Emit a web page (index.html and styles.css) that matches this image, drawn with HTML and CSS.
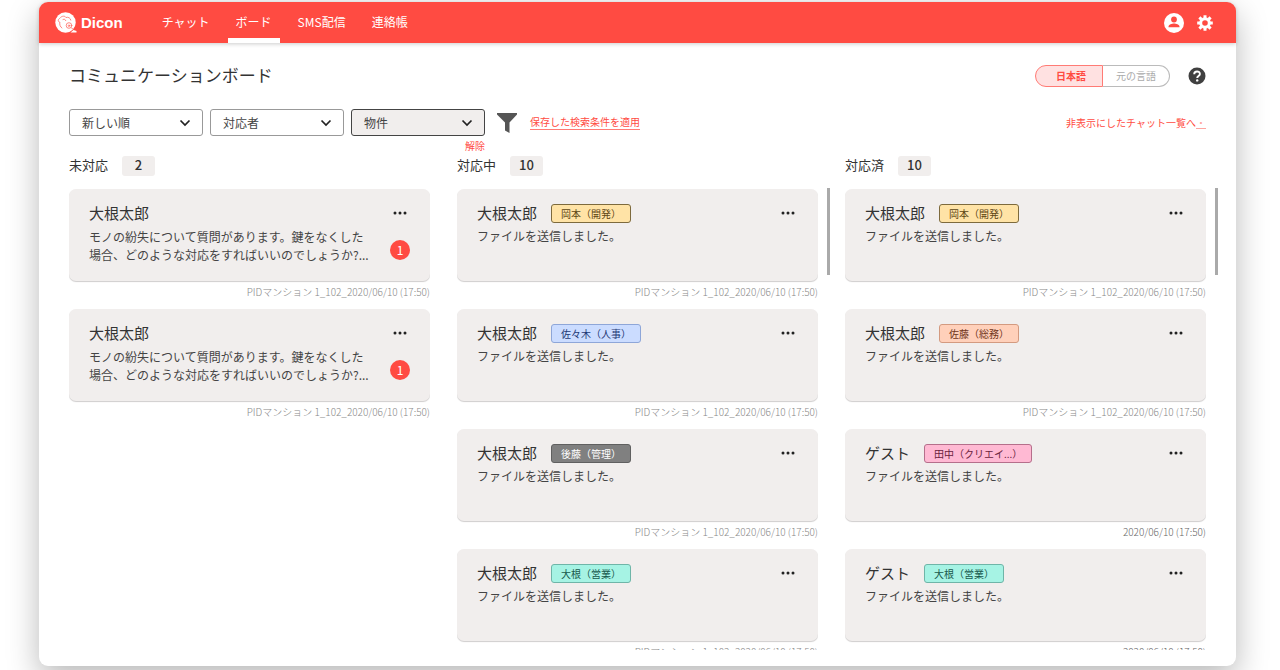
FILE: index.html
```html
<!DOCTYPE html>
<html lang="ja">
<head>
<meta charset="utf-8">
<title>Dicon</title>
<link rel="stylesheet" href="styles.css">
</head>
<body>
<svg width="0" height="0" class="defs" aria-hidden="true">
  <symbol id="chevron" viewBox="0 0 12 8"><path d="M1.500 1.500 6 6l4.500-4.500" fill="none" stroke="#222" stroke-width="1.700"/></symbol>
  <symbol id="dots" viewBox="0 0 14 4"><circle cx="2" cy="2" r="1.500"/><circle cx="7" cy="2" r="1.500"/><circle cx="12" cy="2" r="1.500"/></symbol>
</svg>
<div class="window">
  <header class="topbar">
    <a class="brand" href="#">
      <svg class="brand-mark" viewBox="0 0 22 22" aria-hidden="true">
        <circle cx="10.500" cy="10.500" r="10.200" fill="#fff"/>
        <path d="M15.500 20.400h6v-1.500l-3-1z" fill="#fff"/>
        <g fill="none" stroke="#ff6a62" stroke-width=".8" stroke-linecap="round">
          <path d="M4.500 6.500c-2 .8-1.500 3.500.4 3.700-.6 2.300.3 4.600 2 5.800M5.500 5.500C7 3.700 10 3.700 11 5.500c2.200-.8 4.500.5 4.800 2.600M8 7.500c1.500-.8 2.500 0 2.700 1"/>
          <circle cx="14" cy="13.500" r="2.800"/><circle cx="14" cy="13.700" r=".8"/>
          <path d="M16.500 16l2 1.500"/>
        </g>
      </svg>
      <span>Dicon</span>
    </a>
    <nav class="nav">
      <a href="#">チャット</a>
      <a href="#" class="active" aria-current="page">ボード</a>
      <a href="#">SMS配信</a>
      <a href="#">連絡帳</a>
    </nav>
    <button class="icon-btn" aria-label="アカウント">
      <svg width="20" height="20" viewBox="0 0 20 20"><circle cx="10" cy="10" r="10" fill="#fff"/><circle cx="10" cy="6.500" r="2.900" fill="#ff4b42"/><path d="M4.500 13.800c0-2.200 3.500-3.200 5.500-3.200s5.500 1 5.500 3.200v.4h-11z" fill="#ff4b42"/></svg>
    </button>
    <button class="icon-btn" aria-label="設定">
      <svg width="16" height="16" viewBox="-8 -8 16 16">
        <circle r="4.300" fill="none" stroke="#fff" stroke-width="3"/>
        <g stroke="#fff" stroke-width="3"><path d="M0-5v-2.800M0 5v2.800M-5 0h-2.800M5 0h2.800M3.600-3.600l2-2M-3.600 3.600l-2 2M-3.600-3.600l-2-2M3.600 3.600l2 2"/></g>
      </svg>
    </button>
  </header>

  <main class="content">
    <div class="title-row">
      <h1 class="title">コミュニケーションボード</h1>
      <div class="toggle">
        <button class="toggle-opt on" aria-pressed="true">日本語</button>
        <button class="toggle-opt" aria-pressed="false">元の言語</button>
      </div>
      <button class="help" aria-label="ヘルプ">
        <svg width="18" height="18" viewBox="0 0 18 18"><circle cx="9" cy="9" r="8.500" fill="#404040"/><path d="M6.200 7.200c0-3.700 5.700-3.600 5.700-.2 0 2-2.700 2.100-2.700 4" fill="none" stroke="#fff" stroke-width="1.900"/><circle cx="9.200" cy="13.400" r="1.200" fill="#fff"/></svg>
      </button>
    </div>

    <div class="filters">
      <div class="select">
        <select aria-label="並び順"><option>新しい順</option></select>
        <svg class="chevron" aria-hidden="true"><use href="#chevron"/></svg>
      </div>
      <div class="select">
        <select aria-label="対応者"><option>対応者</option></select>
        <svg class="chevron" aria-hidden="true"><use href="#chevron"/></svg>
      </div>
      <div class="select chosen">
        <select aria-label="物件"><option>物件</option></select>
        <svg class="chevron" aria-hidden="true"><use href="#chevron"/></svg>
        <button class="clear">解除</button>
      </div>
      <svg class="funnel" viewBox="0 0 20 20" aria-hidden="true"><path d="M0 0h20v1.500L12.500 9.500V20L8 17.500v-8L0 1.500z" fill="#555"/></svg>
      <a class="link" href="#">保存した検索条件を適用</a>
      <a class="link plain" href="#">非表示にしたチャット一覧へ<span class="more">・</span></a>
    </div>

    <div class="board">
      <section class="column">
        <div class="column-head"><h2>未対応</h2><span class="count">2</span></div>
        <div class="list">
          <article class="card">
            <div class="card-head"><h3>大根太郎</h3><button class="menu" aria-label="メニュー"><svg><use href="#dots"/></svg></button></div>
            <div class="card-body"><p class="two">モノの紛失について質問があります。鍵をなくした<br>場合、どのような対応をすればいいのでしょうか?...</p><span class="unread">1</span></div>
          </article>
          <p class="meta">PIDマンション 1_102_2020/06/10 (17:50)</p>
          <article class="card">
            <div class="card-head"><h3>大根太郎</h3><button class="menu" aria-label="メニュー"><svg><use href="#dots"/></svg></button></div>
            <div class="card-body"><p class="two">モノの紛失について質問があります。鍵をなくした<br>場合、どのような対応をすればいいのでしょうか?...</p><span class="unread">1</span></div>
          </article>
          <p class="meta">PIDマンション 1_102_2020/06/10 (17:50)</p>
        </div>
      </section>

      <section class="column">
        <div class="column-head"><h2>対応中</h2><span class="count">10</span></div>
        <div class="list">
          <article class="card">
            <div class="card-head"><h3>大根太郎</h3><span class="tag yellow">岡本（開発）</span><button class="menu" aria-label="メニュー"><svg><use href="#dots"/></svg></button></div>
            <div class="card-body"><p>ファイルを送信しました。</p></div>
          </article>
          <p class="meta">PIDマンション 1_102_2020/06/10 (17:50)</p>
          <article class="card">
            <div class="card-head"><h3>大根太郎</h3><span class="tag blue">佐々木（人事）</span><button class="menu" aria-label="メニュー"><svg><use href="#dots"/></svg></button></div>
            <div class="card-body"><p>ファイルを送信しました。</p></div>
          </article>
          <p class="meta">PIDマンション 1_102_2020/06/10 (17:50)</p>
          <article class="card">
            <div class="card-head"><h3>大根太郎</h3><span class="tag gray">後藤（管理）</span><button class="menu" aria-label="メニュー"><svg><use href="#dots"/></svg></button></div>
            <div class="card-body"><p>ファイルを送信しました。</p></div>
          </article>
          <p class="meta">PIDマンション 1_102_2020/06/10 (17:50)</p>
          <article class="card">
            <div class="card-head"><h3>大根太郎</h3><span class="tag teal">大根（営業）</span><button class="menu" aria-label="メニュー"><svg><use href="#dots"/></svg></button></div>
            <div class="card-body"><p>ファイルを送信しました。</p></div>
          </article>
          <p class="meta">PIDマンション 1_102_2020/06/10 (17:50)</p>
        </div>
        <span class="scroll-thumb"></span>
      </section>

      <section class="column">
        <div class="column-head"><h2>対応済</h2><span class="count">10</span></div>
        <div class="list">
          <article class="card">
            <div class="card-head"><h3>大根太郎</h3><span class="tag yellow">岡本（開発）</span><button class="menu" aria-label="メニュー"><svg><use href="#dots"/></svg></button></div>
            <div class="card-body"><p>ファイルを送信しました。</p></div>
          </article>
          <p class="meta">PIDマンション 1_102_2020/06/10 (17:50)</p>
          <article class="card">
            <div class="card-head"><h3>大根太郎</h3><span class="tag orange">佐藤（総務）</span><button class="menu" aria-label="メニュー"><svg><use href="#dots"/></svg></button></div>
            <div class="card-body"><p>ファイルを送信しました。</p></div>
          </article>
          <p class="meta">PIDマンション 1_102_2020/06/10 (17:50)</p>
          <article class="card">
            <div class="card-head"><h3>ゲスト</h3><span class="tag pink">田中（クリエイ...）</span><button class="menu" aria-label="メニュー"><svg><use href="#dots"/></svg></button></div>
            <div class="card-body"><p>ファイルを送信しました。</p></div>
          </article>
          <p class="meta dark">2020/06/10 (17:50)</p>
          <article class="card">
            <div class="card-head"><h3>ゲスト</h3><span class="tag teal">大根（営業）</span><button class="menu" aria-label="メニュー"><svg><use href="#dots"/></svg></button></div>
            <div class="card-body"><p>ファイルを送信しました。</p></div>
          </article>
          <p class="meta dark">2020/06/10 (17:50)</p>
        </div>
        <span class="scroll-thumb"></span>
      </section>
    </div>
  </main>
</div>
</body>
</html>
```
FILE: styles.css
```css
* { box-sizing: border-box; }
body {
  margin: 0;
  height: 100vh;
  padding: 2px 44px 4px 39px;
  background: #fff;
  color: #333;
  font-family: "Noto Sans CJK JP", sans-serif;
  font-size: 12px;
  overflow: hidden;
}
h1, h2, h3, p { margin: 0; font-weight: 400; }
button { border: 0; padding: 0; background: none; font: inherit; color: inherit; cursor: pointer; }
a { text-decoration: none; }
svg { display: block; }
.defs { position: absolute; }

.window {
  display: flex;
  flex-direction: column;
  height: 100%;
  background: #fff;
  border-radius: 9px;
  box-shadow: 0 12px 32px rgba(0, 0, 0, .28);
}

.topbar {
  display: flex;
  align-items: center;
  flex: none;
  height: 41px;
  padding: 0 23px 0 16px;
  background: #ff4b42;
  color: #fff;
  border-radius: 9px 9px 0 0;
  box-shadow: 0 1px 4px rgba(0, 0, 0, .2);
}
.brand {
  display: flex;
  align-items: center;
  gap: 4px;
  color: #fff;
  font: 700 15px/20px "Liberation Sans", sans-serif;
}
.brand-mark { width: 22px; height: 22px; }
.nav { display: flex; align-self: stretch; gap: 10px; margin-left: 31px; flex: 1; }
.nav a {
  display: flex;
  align-items: center;
  padding: 0 8px 2px;
  color: #fff;
}
.nav .active { box-shadow: inset 0 -5px #fff; }
.icon-btn { display: grid; place-items: center; height: 20px; }
.icon-btn + .icon-btn { margin-left: 13px; }

.content {
  display: flex;
  flex-direction: column;
  flex: 1;
  min-height: 0;
  padding: 22px 30px 16px;
}
.title-row { display: flex; align-items: center; height: 22px; }
.title { flex: 1; font-size: 17px; line-height: 20px; padding-bottom: 2px; }
.toggle { display: flex; margin-right: 18px; }
.toggle-opt {
  width: 67px;
  height: 22px;
  border: 1px solid #bbb;
  border-left: 0;
  border-radius: 0 11px 11px 0;
  color: #aaa;
  font-size: 10px;
  line-height: 20px;
}
.toggle-opt.on {
  width: 68px;
  padding-left: 4px;
  border: 1px solid #ff7b75;
  border-radius: 11px 0 0 11px;
  background: #ffe1e1;
  color: #ff4b42;
  font-weight: 700;
}

.filters { display: flex; align-items: center; gap: 7px; margin-top: 22px; }
.select { position: relative; width: 134px; height: 27px; }
.select select {
  appearance: none;
  width: 100%;
  height: 100%;
  padding: 0 12px;
  border: 1px solid #999;
  border-radius: 3px;
  background: #fff;
  color: #444;
  font: inherit;
}
.select.chosen select { background: #f1eeed; border-color: #444; }
.chevron { position: absolute; top: 10px; right: 12px; width: 12px; height: 8px; pointer-events: none; }
.clear {
  position: absolute;
  top: 100%;
  right: 0;
  padding-top: 3px;
  color: #ff4b42;
  font-size: 10px;
  line-height: 14px;
}
.funnel { width: 20px; height: 20px; margin: 0 6px 0 5px; }
.link { color: #ff4b42; font-size: 10px; line-height: 13px; padding-bottom: 1px; border-bottom: 1px solid #ff7b75; }
.link.plain { margin-left: auto; border-bottom: 0; }
.more { text-decoration: underline; opacity: .5; }

.board {
  display: grid;
  grid-template-columns: repeat(3, 1fr);
  gap: 27px;
  flex: 1;
  min-height: 0;
  margin-top: 20px;
}
.column { position: relative; display: flex; flex-direction: column; min-height: 0; }
.column-head { display: flex; align-items: center; gap: 14px; height: 20px; margin-bottom: 13px; }
.column-head h2 { font-size: 13px; line-height: 18px; padding-bottom: 2px; }
.count {
  width: 33px;
  height: 20px;
  border-radius: 3px;
  background: #f1eeed;
  font-size: 13px;
  font-weight: 500;
  line-height: 18px;
  text-align: center;
}
.list { flex: 1; min-height: 0; overflow: hidden; }
.scroll-thumb {
  position: absolute;
  top: 32px;
  right: -12px;
  width: 3px;
  height: 87px;
  background: #aaa;
}

.card {
  height: 92px;
  padding: 14px 20px 0;
  border-radius: 7px;
  background: #f1eeed;
  box-shadow: 0 1px 1px #d0cece;
}
.card-head { display: flex; align-items: center; height: 20px; }
.card-head h3 { font-size: 15px; line-height: 20px; }
.tag {
  margin-left: 14px;
  padding: 0 9px;
  border: 1px solid;
  border-radius: 3px;
  font-size: 10px;
  line-height: 17px;
}
.yellow { background: #ffe3a6; border-color: #7d6a3d; color: #5d4614; }
.blue { background: #cbdcff; border-color: #8ea6d8; color: #1d3874; }
.gray { background: #808080; border-color: #606060; color: #fff; }
.teal { background: #a6f3e4; border-color: #6fb5a8; color: #18594d; }
.orange { background: #ffd0ba; border-color: #d39a80; color: #70351a; }
.pink { background: #ffb9d3; border-color: #b56f8b; color: #6a1f3c; }
.menu { margin-left: auto; padding: 4px 3px; }
.menu svg { width: 14px; height: 4px; fill: #222; }
.card-body {
  display: flex;
  justify-content: space-between;
  padding-top: 4px;
  line-height: 18px;
}
.card-body p { white-space: nowrap; color: #444; }
.card-body .two { padding-top: 1px; }
.unread {
  width: 20px;
  height: 20px;
  margin-top: 13px;
  border-radius: 50%;
  background: #ff4b42;
  color: #fff;
  line-height: 19px;
  text-align: center;
}
.meta {
  height: 28px;
  padding-top: 4px;
  color: #888;
  font-size: 10px;
  font-weight: 300;
  line-height: 13px;
  text-align: right;
}
.meta.dark { color: #666; }
```
